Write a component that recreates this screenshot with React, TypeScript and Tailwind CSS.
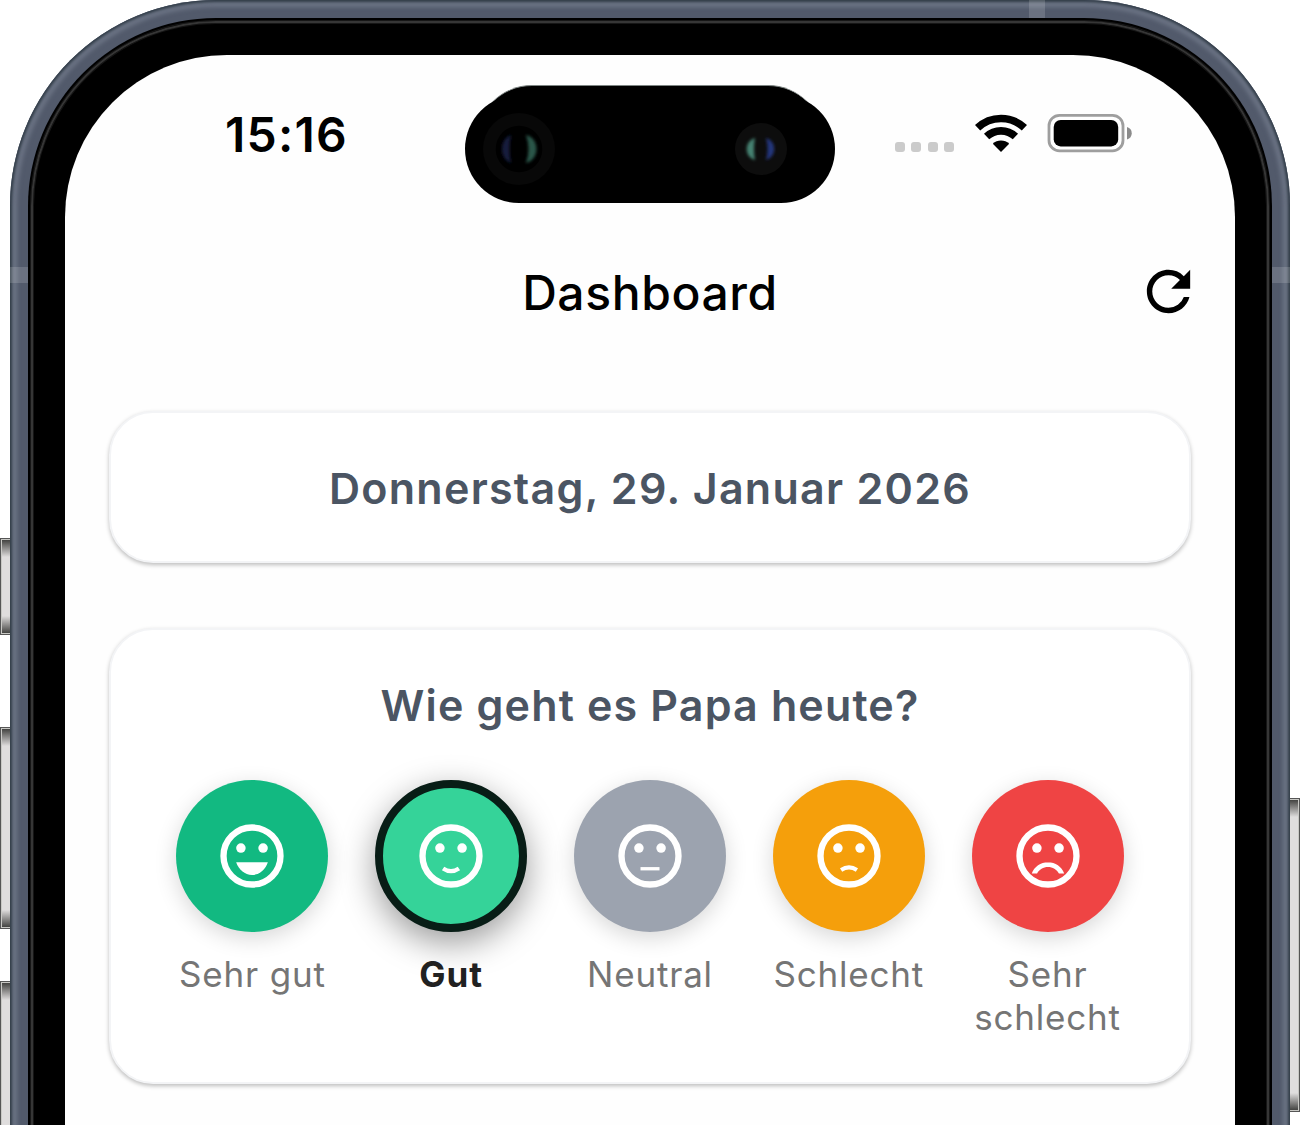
import React from "react";

type Mood = {
  label: string;
  color: string;
  face: React.ReactNode;
  selected?: boolean;
};

const moods: Mood[] = [
  {
    label: "Sehr gut",
    color: "bg-[#12b981]",
    face: <path fill="currentColor" d="M12 18c2.28 0 4.22-1.66 5-4H7c.78 2.34 2.72 4 5 4z" />,
  },
  {
    label: "Gut",
    color: "bg-[#35d399]",
    face: <path fill="none" stroke="currentColor" strokeWidth={1.3} d="M9.5 15.95Q12 17.65 14.5 15.95" />,
    selected: true,
  },
  {
    label: "Neutral",
    color: "bg-[#9ca3af]",
    face: <path fill="currentColor" d="M9 15.5h6v1.05H9z" />,
  },
  {
    label: "Schlecht",
    color: "bg-[#f59f0b]",
    face: <path fill="none" stroke="currentColor" strokeWidth={1.3} d="M9.5 16.4Q12 14.8 14.5 16.4" />,
  },
  {
    label: "Sehr schlecht",
    color: "bg-[#ef4444]",
    face: (
      <path
        fill="currentColor"
        d="M12 14c-2.33 0-4.32 1.45-5.12 3.5h1.67c.69-1.19 1.97-2 3.45-2s2.75.81 3.45 2h1.67c-.8-2.05-2.79-3.5-5.12-3.5z"
      />
    ),
  },
];

const MoodButton: React.FC<{ mood: Mood }> = ({ mood }) => (
  <div className="flex flex-1 flex-col items-center">
    <button
      className={`flex size-[152px] items-center justify-center rounded-full text-white ${mood.color} ${
        mood.selected
          ? "border-8 border-[#081d16] shadow-[0_11px_34px_rgba(0,0,0,0.4)]"
          : "shadow-[0_6px_22px_rgba(0,0,0,0.16)]"
      }`}
    >
      <svg viewBox="0 0 24 24" className="size-[76px] shrink-0">
        <circle cx="12" cy="12" r="9" fill="none" stroke="currentColor" strokeWidth="2" />
        <circle cx="8.5" cy="9.5" r="1.5" fill="currentColor" />
        <circle cx="15.5" cy="9.5" r="1.5" fill="currentColor" />
        {mood.face}
      </svg>
    </button>
    <span
      className={`mt-[21px] w-[160px] text-center text-[35px] leading-[43px] ${
        mood.selected ? "font-bold tracking-[1px] text-[#212121]" : "tracking-[0.8px] text-[#757575]"
      }`}
    >
      {mood.label}
    </span>
  </div>
);

const StatusBar = () => (
  <div className="flex h-[160px] items-start justify-between pt-[50px]">
    <span className="ml-[160px] text-[48px] leading-[60px] font-semibold tracking-[1.2px] text-black">15:16</span>
    <div className="mr-[102px] flex h-[60px] items-start">
      <div className="mt-[37px] flex gap-[6.3px]">
        {[0, 1, 2, 3].map((dot) => (
          <span key={dot} className="size-[10px] rounded-[3px] bg-[#cbcbcb]" />
        ))}
      </div>
      <svg viewBox="0 0 52 38" className="mt-[9px] ml-[21px] h-[38px] w-[52px]" fill="none" stroke="#000">
        <path strokeWidth="7.6" d="M2.6 13.8A34 34 0 0 1 49.4 13.8" />
        <path strokeWidth="7.6" d="M11.6 22.6A21 21 0 0 1 40.4 22.6" />
        <path fill="#000" stroke="none" d="M26 38L17.8 29.8A12 12 0 0 1 34.2 29.8Z" />
      </svg>
      <svg viewBox="0 0 86 40" className="mt-[8px] ml-[20px] h-[40px] w-[86px]">
        <rect x="2" y="2.3" width="74" height="35.6" rx="10.5" fill="none" stroke="#9e9e9e" strokeWidth="2.8" />
        <rect x="6.7" y="7" width="64.5" height="26.4" rx="7" />
        <path fill="#8b8b8b" d="M80 14a6.5 6.5 0 0 1 0 12.5z" />
      </svg>
    </div>
  </div>
);

const DynamicIsland = () => (
  <div className="absolute top-[85px] left-[465px] h-[118px] w-[370px]">
    <div className="absolute top-0 left-[12px] h-[110px] w-[346px] rounded-[55px] border-t border-[#7d8583] bg-black" />
    <div className="absolute bottom-0 left-0 h-[108px] w-[370px] rounded-[54px] bg-black" />
    <svg viewBox="0 0 370 118" className="absolute inset-0">
      <defs>
        <filter id="soft" x="-50%" y="-50%" width="200%" height="200%">
          <feGaussianBlur stdDeviation="1.7" />
        </filter>
      </defs>
      <circle cx="54" cy="64" r="36" fill="#080808" />
      <circle cx="54" cy="64" r="23.3" fill="#000" />
      <path fill="#121a3c" filter="url(#soft)" d="M46 50c-12 4-12 24 0 28q-3-14 0-28z" />
      <path fill="#29574a" filter="url(#soft)" d="M61 50c14 3 14 25 0 28q5-14 0-28z" />
      <circle cx="296" cy="64" r="26" fill="#0d0d0d" />
      <path fill="#458171" filter="url(#soft)" d="M290 53c-11 3-11 19 0 22q-2-11 0-22z" />
      <path fill="#24357a" filter="url(#soft)" d="M301 53c11 3 11 19 0 22q3-11 0-22z" />
    </svg>
  </div>
);

const sideButtons = [
  "left-0 top-[538px] h-[97px]",
  "left-0 top-[727px] h-[202px]",
  "left-0 top-[981px] h-[202px]",
  "right-0 top-[798px] h-[314px]",
];

const App: React.FC = () => {
  return (
    <div className="relative h-[1125px] w-[1300px] overflow-hidden bg-white font-['Inter',sans-serif]">
      {sideButtons.map((place) => (
        <div
          key={place}
          className={`absolute w-[14px] border border-[#555] bg-[linear-gradient(#3a3a38,#dfdddd_18px,#dfdddd_calc(100%-18px),#3a3a38)] shadow-[inset_0_0_0_1px_#c8c8c4] ${place}`}
        />
      ))}

      {/* phone body */}
      <div className="relative mx-[10px] h-[1500px] rounded-[206px] bg-[#525a6b] p-[18px] shadow-[inset_0_0_3px_2px_#2f3a45,inset_0_0_4px_7px_#6c7485]">
        <div className="h-full rounded-[188px] bg-black p-[3px]">
          <div className="h-full rounded-[185px] border-2 border-[#363636] p-8 shadow-[0_0_0_1px_#161616,inset_0_0_0_1px_#161616]">
            <div className="h-full overflow-hidden rounded-[162px] bg-[#fefefe]">
              <StatusBar />
              <header className="flex h-[157px] items-start justify-end">
                <h1 className="flex-1 pt-[47.5px] pl-[99px] text-center text-[48px] leading-[60px] font-medium tracking-[0.6px] text-black">
                  Dashboard
                </h1>
                <svg viewBox="0 0 24 24" className="mt-[44px] mr-[34px] size-[65px]">
                  <path d="M17.65 6.35A7.958 7.958 0 0 0 12 4c-4.42 0-7.99 3.58-7.99 8s3.57 8 7.99 8c3.73 0 6.84-2.55 7.73-6h-2.08A5.99 5.99 0 0 1 12 18c-3.31 0-6-2.69-6-6s2.69-6 6-6c1.66 0 3.14.69 4.22 1.78L13 11h7V4z" />
                </svg>
              </header>

              <main className="mt-[39px] flex flex-col gap-[65px] px-[44px] text-center">
                <section className="flex h-[152px] items-center justify-center rounded-[44px] border-2 border-[#f3f4f6] bg-white pt-px shadow-[0_2px_4px_rgba(0,0,0,0.26)]">
                  <h2 className="text-[43px] leading-[52px] font-semibold tracking-[1.27px] text-[#4b5563]">
                    Donnerstag, 29. Januar 2026
                  </h2>
                </section>
                <section className="h-[456px] rounded-[44px] border-2 border-[#f3f4f6] bg-white px-[42px] pt-[49px] shadow-[0_2px_4px_rgba(0,0,0,0.26)]">
                  <h2 className="text-[43px] leading-[52px] font-semibold tracking-[1.15px] text-[#4b5563]">
                    Wie geht es Papa heute?
                  </h2>
                  <div className="mt-[49.4px] flex">
                    {moods.map((mood) => (
                      <MoodButton key={mood.label} mood={mood} />
                    ))}
                  </div>
                </section>
              </main>
            </div>
          </div>
        </div>
        {/* antenna bands */}
        <span className="absolute top-0 left-[1019px] h-[18px] w-4 bg-white/15" />
        <span className="absolute top-[267px] left-0 h-4 w-[18px] bg-white/15" />
        <span className="absolute top-[267px] right-0 h-4 w-[18px] bg-white/15" />
      </div>
      <DynamicIsland />
    </div>
  );
};

export default App;
